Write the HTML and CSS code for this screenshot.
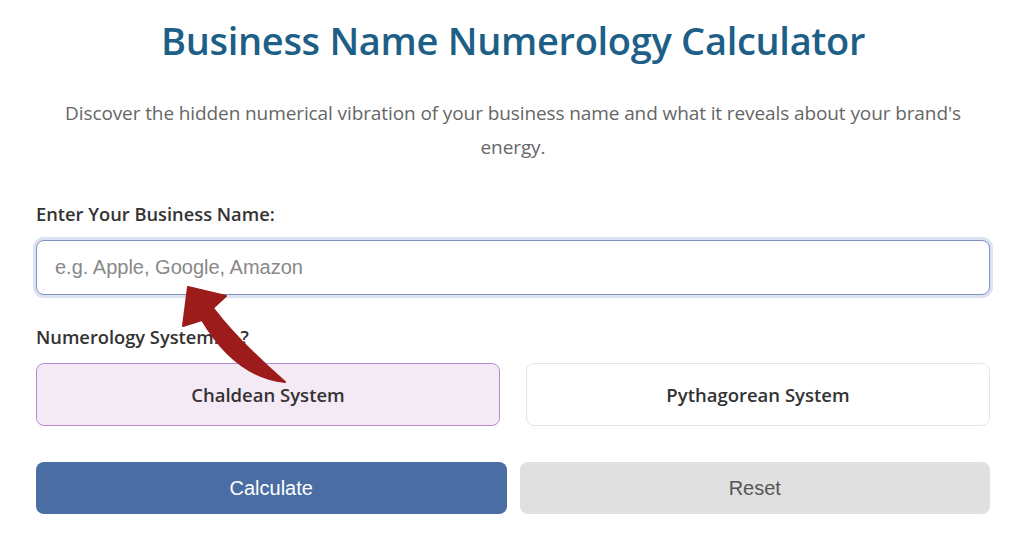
FILE: index.html
```html
<!DOCTYPE html>
<html lang="en">
<head>
<meta charset="utf-8">
<title>Business Name Numerology Calculator</title>
<link rel="stylesheet" href="styles.css">
</head>
<body>
<main class="calc">
  <h1 class="title">Business Name Numerology Calculator</h1>
  <p class="intro">Discover the hidden numerical vibration of your business name and what it reveals about your brand's energy.</p>

  <label class="label" for="bizname">Enter Your Business Name:</label>
  <input class="name-input" id="bizname" type="text" placeholder="e.g. Apple, Google, Amazon">

  <div class="label label-system">Numerology System: <span class="help">?</span></div>
  <div class="systems">
    <button class="system system-active" type="button">Chaldean System</button>
    <button class="system" type="button">Pythagorean System</button>
  </div>

  <div class="actions">
    <button class="btn btn-primary" type="button">Calculate</button>
    <button class="btn btn-secondary" type="button">Reset</button>
  </div>

  <svg class="arrow" width="1024" height="536" viewBox="0 0 1024 536" aria-hidden="true">
    <path d="M188,287 L226,296 L213,308 Q238,341 285,382 Q236,377 202,320 L183,326 Z" fill="#9c1b1b" stroke="#9c1b1b" stroke-width="2" stroke-linejoin="round"/>
  </svg>
</main>
</body>
</html>
```
FILE: styles.css
```css
* { box-sizing: border-box; }
html, body { margin: 0; padding: 0; background: #ffffff; }
body { font-family: "Open Sans", "Liberation Sans", sans-serif; }

.calc {
  width: 954px;
  margin: 0 0 0 36px;
  padding-top: 14px;
  display: flex;
  flex-direction: column;
}

.title {
  margin: 0;
  text-align: center;
  font-size: 38px;
  font-weight: 600;
  line-height: 52px;
  color: #1d5f87;
  letter-spacing: -0.3px;
}

.intro {
  margin: 30px 0 0;
  padding: 0 20px;
  text-align: center;
  font-size: 19px;
  line-height: 34px;
  color: #666666;
  letter-spacing: -0.1px;
}

.label {
  margin-top: 38px;
  font-size: 18.3px;
  font-weight: 600;
  color: #333333;
  line-height: 24px;
}

.help { margin-left: 17px; }

.name-input {
  margin-top: 14px;
  height: 55px;
  width: 100%;
  padding: 0 18px;
  border: 1.5px solid #8092bd;
  border-radius: 8px;
  box-shadow: 0 0 0 3px #dbe3f2;
  font-family: "Liberation Sans", Arial, sans-serif;
  font-size: 20px;
  color: #333;
  outline: none;
}
.name-input::placeholder { color: #888888; }

.label-system { margin-top: 30px; }

.systems {
  margin-top: 14px;
  display: grid;
  grid-template-columns: 1fr 1fr;
  gap: 26px;
}

.system {
  height: 63px;
  border: 1px solid #e6e6e6;
  border-radius: 8px;
  background: #ffffff;
  font-family: "Open Sans", "Liberation Sans", sans-serif;
  font-size: 18.5px;
  font-weight: 600;
  color: #333333;
}
.system-active {
  background: #f4eaf6;
  border-color: #b98ad0;
}

.actions {
  margin-top: 36px;
  display: grid;
  grid-template-columns: 1fr 1fr;
  gap: 13px;
}

.btn {
  height: 52px;
  border: none;
  border-radius: 8px;
  font-family: "Liberation Sans", Arial, sans-serif;
  font-size: 20px;
}
.btn-primary { background: #4a6ea3; color: #ffffff; }
.btn-secondary { background: #e0e0e0; color: #555555; }

.arrow {
  position: absolute;
  left: 0;
  top: 0;
  pointer-events: none;
}
```
